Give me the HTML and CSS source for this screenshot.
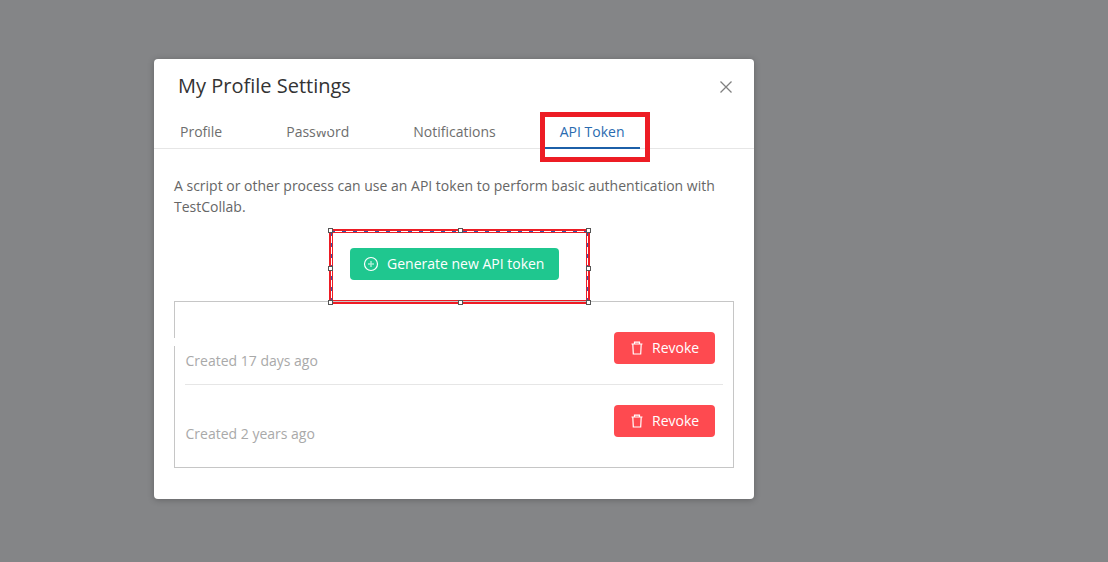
FILE: index.html
```html
<!DOCTYPE html>
<html lang="en">
<head>
<meta charset="utf-8">
<title>My Profile Settings</title>
<link rel="stylesheet" href="styles.css">
</head>
<body>
<div class="modal">
  <header class="modal-head">
    <h1 class="title">My Profile Settings</h1>
    <svg class="close" width="12" height="12" viewBox="0 0 12 12" aria-label="Close"><path d="M.5.5l11 11M11.500.5l-11 11"/></svg>
  </header>
  <nav class="tabs">
    <a class="tab">Profile</a>
    <a class="tab">Password<span class="erase-word"></span></a>
    <a class="tab">Notifications</a>
    <a class="tab active">API Token<span class="mark-tab"></span></a>
  </nav>
  <section class="body">
    <p class="intro">A script or other process can use an API token to perform basic authentication with TestCollab.</p>
    <div class="generate-row">
      <div class="selection">
        <i class="h tl"></i><i class="h tc"></i><i class="h tr"></i><i class="h ml"></i><i class="h mr"></i><i class="h bl"></i><i class="h bc"></i><i class="h br"></i>
        <button class="btn btn-green">
          <svg width="16" height="16" viewBox="0 0 16 16"><circle cx="8" cy="8" r="6.5"/><path class="plus" d="M8 5v6M5 8h6"/></svg>
          Generate new API token
        </button>
      </div>
    </div>
    <div class="tokens">
      <span class="erase-border"></span>
      <div class="token">
        <span class="created">Created 17 days ago</span>
        <button class="btn btn-red">
          <svg width="14" height="14" viewBox="0 0 14 14"><path d="M1.500 3h11M4.500 3V1.200h5V3M2.800 3l.5 10h7.400l.5-10"/></svg>
          Revoke
        </button>
      </div>
      <div class="token">
        <span class="created">Created 2 years ago</span>
        <button class="btn btn-red">
          <svg width="14" height="14" viewBox="0 0 14 14"><path d="M1.500 3h11M4.500 3V1.200h5V3M2.800 3l.5 10h7.400l.5-10"/></svg>
          Revoke
        </button>
      </div>
    </div>
  </section>
</div>
</body>
</html>
```
FILE: styles.css
```css
* { box-sizing: border-box; }
html, body { height: 100%; }
body {
  margin: 0;
  padding: 59px 0 0 154px;
  background: #848587;
  font-family: "Open Sans", "Liberation Sans", sans-serif;
  overflow: hidden;
}
.modal {
  width: 600px;
  height: 440px;
  background: #fff;
  border-radius: 4px;
  box-shadow: 0 1px 6px rgba(0, 0, 0, .25);
}
.modal-head {
  height: 59px;
  padding: 0 22px 6px 24px;
  display: flex;
  align-items: center;
  justify-content: space-between;
}
.title {
  margin: 0;
  font-size: 20px;
  font-weight: 400;
  color: #333;
  line-height: 54px;
}
.close { margin-top: 3px; }
.close path { fill: none; stroke: #808080; stroke-width: 1.3; }
.tabs {
  height: 31px;
  padding-left: 10px;
  display: flex;
  align-items: flex-start;
  gap: 32px;
  border-bottom: 1px solid #e6e6e6;
}
.tab {
  position: relative;
  padding: 4px 16px 0;
  font-size: 14px;
  line-height: 19px;
  color: #6e6e6e;
  height: 31px;
}
.tab.active { color: #2a6bb0; border-bottom: 2px solid #1c5fa8; padding-right: 15px; }
.mark-tab {
  position: absolute;
  left: -4px;
  right: -10px;
  top: -6px;
  height: 50px;
  border: 5px solid #ed1c24;
}
.erase-word {
  position: absolute;
  left: 46px;
  top: 5px;
  width: 14px;
  height: 8px;
  background: #fff;
}
.body { padding: 26px 20px 0; }
.intro {
  margin: 0;
  font-size: 14px;
  line-height: 21px;
  color: #666;
}
.generate-row { display: flex; justify-content: center; margin-top: 12px; }
.selection {
  position: relative;
  width: 261px;
  height: 75px;
  margin-left: 11px;
  border: 4px solid #ed1c24;
  display: flex;
  justify-content: flex-start;
  padding: 15px 0 0 17px;
}
.selection::before {
  content: "";
  position: absolute;
  inset: -2px;
  background:
    repeating-linear-gradient(90deg, #2a5db0 0 4px, #fff 4px 11px) top / 100% 1px no-repeat,
    repeating-linear-gradient(90deg, #2a5db0 0 4px, #fff 4px 11px) bottom / 100% 1px no-repeat,
    repeating-linear-gradient(0deg, #2a5db0 0 4px, #fff 4px 11px) left / 1px 100% no-repeat,
    repeating-linear-gradient(0deg, #2a5db0 0 4px, #fff 4px 11px) right / 1px 100% no-repeat;
}
.h {
  position: absolute;
  z-index: 1;
  width: 5px;
  height: 5px;
  background: #fff;
  border: 1px solid #555;
}
.tl { left: -5px; top: -5px; }
.tc { left: 125px; top: -5px; }
.tr { right: -5px; top: -5px; }
.ml { left: -5px; top: 33px; }
.mr { right: -5px; top: 33px; }
.bl { left: -5px; bottom: -5px; }
.bc { left: 125px; bottom: -5px; }
.br { right: -5px; bottom: -5px; }
.btn {
  position: relative;
  z-index: 1;
  display: inline-flex;
  align-items: center;
  border: 0;
  border-radius: 4px;
  color: #fff;
  font-family: inherit;
  font-size: 14px;
  font-weight: 500;
  height: 32px;
  padding-bottom: 2px;
}
.btn svg { fill: none; stroke: #fff; stroke-width: 1.2; }
.btn .plus { stroke: #a8ecd4; stroke-width: 1.5; }
.btn-green { width: 209px; background: #1fc78f; padding-left: 13px; gap: 8px; }
.btn-red { width: 101px; background: #fe4a50; padding-left: 16px; gap: 8px; }
.tokens {
  position: relative;
  margin-top: -3px;
  height: 167px;
  border: 1px solid #c6c6c6;
  padding: 0 10px;
}
.erase-border {
  position: absolute;
  left: -1px;
  top: 36px;
  width: 1px;
  height: 8px;
  background: #fff;
}
.token {
  padding: 0 8px 0 0.5px;
  display: flex;
  align-items: flex-end;
  justify-content: space-between;
}
.token:first-of-type { height: 83px; border-bottom: 1px solid #e6e6e6; padding-bottom: 20px; }
.token:last-of-type { height: 73px; padding-bottom: 21px; }
.created { font-size: 14px; line-height: 19px; color: #a9a9a9; margin-bottom: -6px; }
```
